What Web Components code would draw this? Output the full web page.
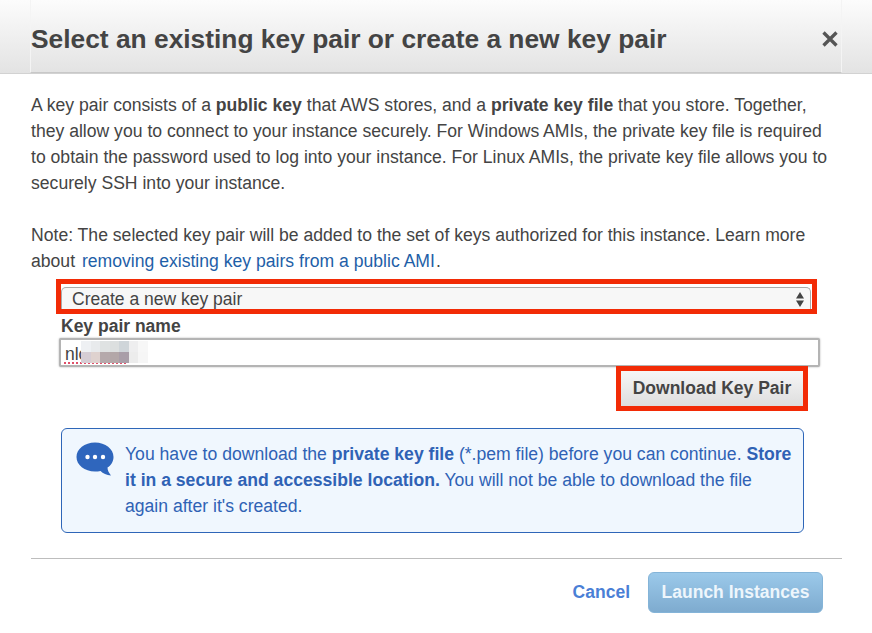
<!DOCTYPE html>
<html>
<head>
<meta charset="utf-8">
<style>
    html, body { margin: 0; padding: 0; background: #fff; }
    body { font-family: "Liberation Sans", Arial, sans-serif; color: #444; width: 872px; height: 633px; overflow: hidden; }
</style>
</head>
<body>
<key-pair-dialog></key-pair-dialog>

<script>
class DialogHeader extends HTMLElement
{
    constructor()
    {
        super();
        this.attachShadow({mode: 'open'});
    }

    connectedCallback()
    {
        this.shadowRoot.innerHTML = `
        <style>
            :host {
                display: block;
                box-sizing: border-box;
                height: 74px;
                padding: 0 30px;
                background: linear-gradient(#fcfcfc, #e3e3e3);
                border-bottom: 1px solid #d2d2d2;
            }

            .inner {
                display: flex;
                align-items: center;
                justify-content: space-between;
                box-sizing: border-box;
                height: 73px;
                padding: 6px 3px 0 0;
                border-left: 1px solid #f4f4f4;
                border-right: 1px solid #f4f4f4;
                border-bottom: 1px solid #c8c8c8;
            }

            h1 {
                margin: 0;
                font-size: 26.35px;
                font-weight: bold;
                color: #444;
            }

            svg {
                display: block;
            }
        </style>
        <div class="inner">
            <h1><slot></slot></h1>
            <svg width="16" height="16" viewBox="0 0 16 16">
                <path d="M1.500 1.500 L14.500 14.500 M14.500 1.500 L1.500 14.500" stroke="#555" stroke-width="3.300" fill="none"/>
            </svg>
        </div>
        `;
    }
}

class RedMark extends HTMLElement
{
    constructor()
    {
        super();
        this.attachShadow({mode: 'open'});
    }

    connectedCallback()
    {
        this.shadowRoot.innerHTML = `
        <style>
            :host {
                display: block;
                box-sizing: border-box;
                border: 5px solid #f22b06;
                overflow: hidden;
            }
        </style>
        <slot></slot>
        `;
    }
}

class KeySelect extends HTMLElement
{
    constructor()
    {
        super();
        this.attachShadow({mode: 'open'});
    }

    connectedCallback()
    {
        this.shadowRoot.innerHTML = `
        <style>
            :host {
                display: flex;
                align-items: center;
                justify-content: space-between;
                box-sizing: border-box;
                height: 30px;
                padding: 0 6px 6px 10px;
                margin-top: 3px;
                background: #f7f7f7;
                border: 1px solid #aaa;
                border-bottom: 0;
                border-radius: 5px 5px 0 0;
                font-size: 17.5px;
                color: #444;
            }
        </style>
        <slot></slot>
        <svg width="8" height="15" viewBox="0 0 8 15">
            <path d="M4 0 L8 6.500 L0 6.500 Z M0 8.500 L8 8.500 L4 15 Z" fill="#444"/>
        </svg>
        `;
    }
}

class NameInput extends HTMLElement
{
    constructor()
    {
        super();
        this.attachShadow({mode: 'open'});
    }

    connectedCallback()
    {
        this.shadowRoot.innerHTML = `
        <style>
            :host {
                display: block;
                position: relative;
                box-sizing: border-box;
                height: 29px;
                padding: 4px 0 0 4px;
                background: #fff;
                border: 2px solid #b4b4b4;
                border-radius: 2px;
                box-shadow: 0 0 2px #aaa;
                font-size: 17.5px;
                color: #444;
                line-height: 20px;
            }

            .squiggle {
                position: absolute;
                left: 3px;
                top: 22px;
                width: 62px;
                border-top: 2px dotted #e0506a;
            }

            .blur {
                position: absolute;
                left: 20px;
                top: 1px;
                display: grid;
                grid-template-columns: repeat(7, 9.5px);
                grid-template-rows: repeat(2, 11px);
            }
        </style>
        <slot></slot>
        <div class="squiggle"></div>
        <div class="blur">
            <i style="background:#eef0f3"></i><i style="background:#e8eaec"></i><i style="background:#dfe2e2"></i><i style="background:#dcdfdf"></i><i style="background:#cfd5d9"></i><i style="background:#eeeeef"></i><i style="background:#f7f7f7"></i>
            <i style="background:#d6cdd4"></i><i style="background:#dfd2cf"></i><i style="background:#b5a9ab"></i><i style="background:#b3a7a8"></i><i style="background:#a99ea8"></i><i style="background:#ececec"></i><i style="background:#f6f6f6"></i>
        </div>
        `;
    }
}

class InfoBox extends HTMLElement
{
    constructor()
    {
        super();
        this.attachShadow({mode: 'open'});
    }

    connectedCallback()
    {
        this.shadowRoot.innerHTML = `
        <style>
            :host {
                display: flex;
                box-sizing: border-box;
                gap: 11px;
                height: 105px;
                margin: 0 38px 0 30px;
                padding: 12px 8px 0 14px;
                background: #f0f7fe;
                border: 1px solid #2e66b8;
                border-radius: 6px;
                color: #2f62b5;
                font-size: 17.6px;
                line-height: 26px;
            }

            svg {
                flex: none;
                margin-top: 1px;
            }
        </style>
        <svg width="38" height="34" viewBox="0 0 38 34">
            <path d="M19 0.500 C29.500 0.500 37.500 7 37.500 15 C37.500 19.500 35 23.500 31.500 25.500 C31.500 28.500 33 31 35 33.500 C30.500 33 27 31.500 24.500 29 C22.800 29.400 21 29.500 19 29.500 C8.500 29.500 0.500 23 0.500 15 C0.500 7 8.500 0.500 19 0.500 Z" fill="#2f66bd"/>
            <circle cx="11.500" cy="15" r="2.200" fill="#fff"/>
            <circle cx="19" cy="15" r="2.200" fill="#fff"/>
            <circle cx="27" cy="15" r="2.200" fill="#fff"/>
        </svg>
        <div><slot></slot></div>
        `;
    }
}

class KeyPairDialog extends HTMLElement
{
    constructor()
    {
        super();
        this.attachShadow({mode: 'open'});
    }

    connectedCallback()
    {
        this.shadowRoot.innerHTML = `
        <style>
            :host {
                display: block;
                font-size: 17.5px;
                color: #444;
            }

            * {
                box-sizing: border-box;
            }

            .body {
                padding: 18px 30px 0 31px;
            }

            p {
                margin: 0;
                max-width: 805px;
                font-size: 17.6px;
                line-height: 26px;
            }

            .note {
                margin-top: 26px;
            }

            a {
                color: #1f5fa8;
                text-decoration: none;
                margin: 0 1px 0 2px;
            }

            .form {
                margin: 5px 25px 0 25px;
            }

            .select-mark {
                width: 761px;
                height: 35px;
            }

            .select-mark key-select {
                margin-right: 1px;
            }

            label {
                display: block;
                margin: 3px 0 2px 5px;
                font-weight: bold;
                line-height: 19px;
                color: #444;
            }

            name-input {
                margin-left: 3px;
                width: 761px;
            }

            .download-row {
                display: flex;
                justify-content: flex-end;
                margin: -1px 9px 0 0;
            }

            .download-mark {
                width: 192px;
                height: 45px;
                position: relative;
            }

            button {
                display: block;
                width: 100%;
                height: 100%;
                border: 0;
                padding: 0;
                background: linear-gradient(#f6f6f6, #dedede);
                font: bold 17.5px "Liberation Sans", Arial, sans-serif;
                color: #444;
            }

            info-box {
                margin-top: 17px;
            }

            hr {
                height: 1px;
                border: 0;
                background: #bdbdbd;
                margin: 25px 0 0 0;
            }

            .footer {
                display: flex;
                justify-content: flex-end;
                align-items: center;
                gap: 18px;
                margin: 13px 19px 0 0;
            }

            .cancel {
                font-weight: bold;
                color: #4a7fd6;
            }

            .launch {
                width: 175px;
                height: 41px;
                background: linear-gradient(#9bc9ea, #7eabcf);
                border: 1px solid #84b4d8;
                border-radius: 6px;
                color: #eef6fc;
            }
        </style>
        <dialog-header>Select an existing key pair or create a new key pair</dialog-header>
        <div class="body">
            <p>A key pair consists of a <b>public key</b> that AWS stores, and a <b>private key file</b> that you store. Together, they allow you to connect to your instance securely. For Windows AMIs, the private key file is required to obtain the password used to log into your instance. For Linux AMIs, the private key file allows you to securely SSH into your instance.</p>
            <p class="note">Note: The selected key pair will be added to the set of keys authorized for this instance. Learn more about <a href="#">removing existing key pairs from a public AMI</a>.</p>
            <div class="form">
                <red-mark class="select-mark"><key-select>Create a new key pair</key-select></red-mark>
                <label>Key pair name</label>
                <name-input>nlc</name-input>
                <div class="download-row">
                    <red-mark class="download-mark"><button>Download Key Pair</button></red-mark>
                </div>
            </div>
            <info-box>
                <span>You have to download the <b>private key file</b> (*.pem file) before you can continue. <b>Store it in a secure and accessible location.</b> You will not be able to download the file again after it's created.</span>
            </info-box>
            <hr>
            <div class="footer">
                <span class="cancel">Cancel</span>
                <button class="launch">Launch Instances</button>
            </div>
        </div>
        `;
    }
}

customElements.define('dialog-header', DialogHeader);
customElements.define('red-mark', RedMark);
customElements.define('key-select', KeySelect);
customElements.define('name-input', NameInput);
customElements.define('info-box', InfoBox);
customElements.define('key-pair-dialog', KeyPairDialog);
</script>
</body>
</html>
